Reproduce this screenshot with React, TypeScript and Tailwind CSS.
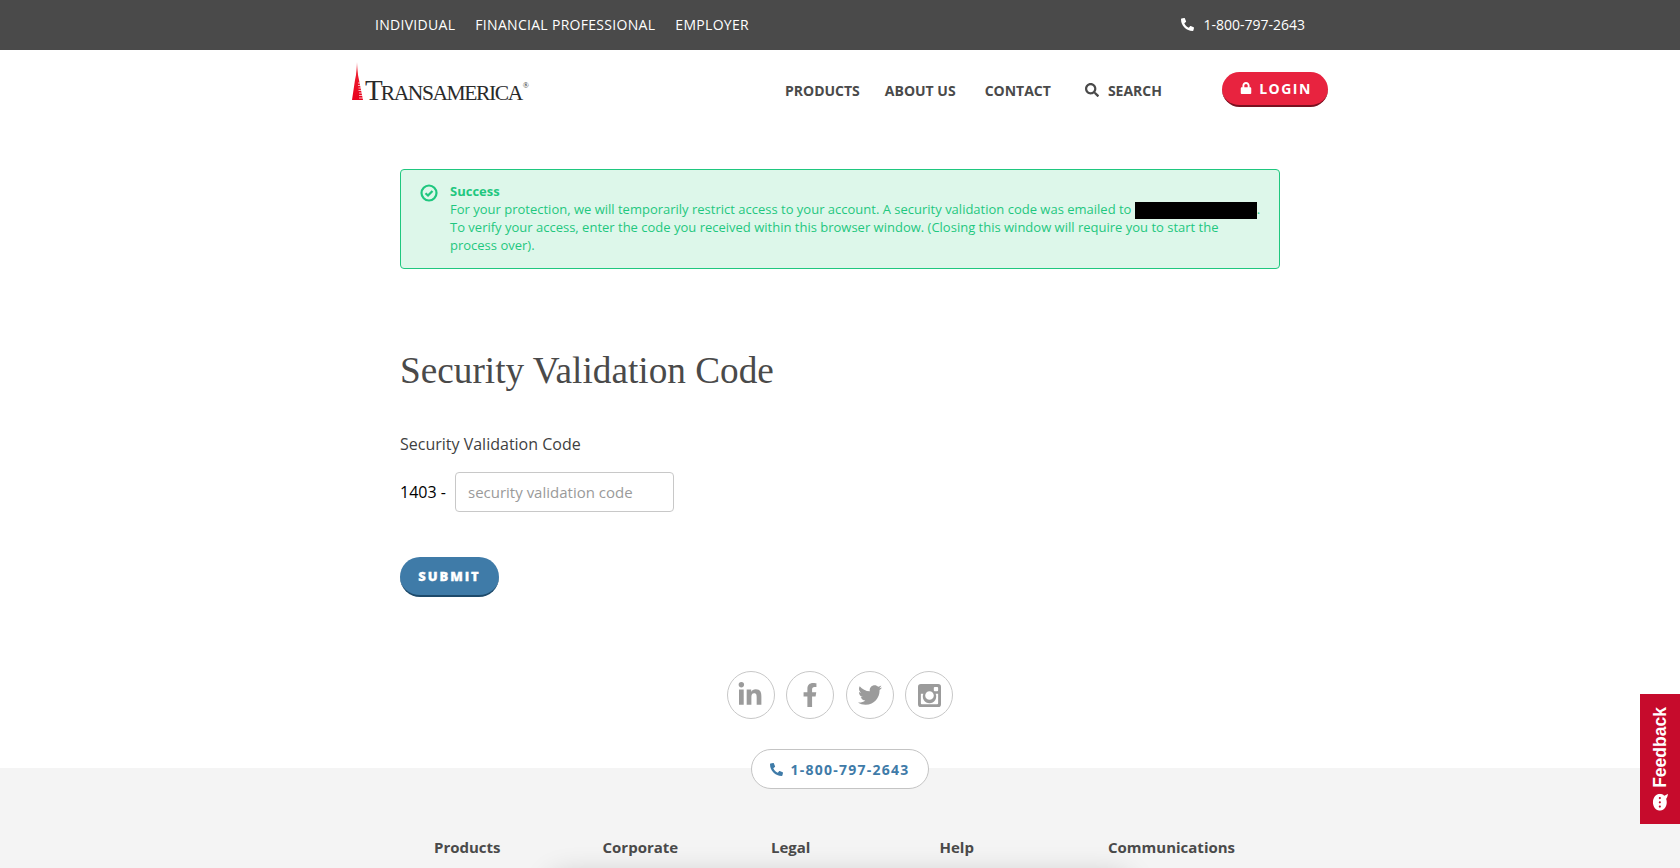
import { FaCommentDots, FaFacebookF, FaLinkedinIn, FaLock, FaPhone, FaSearch, FaTwitter } from "react-icons/fa";

const footerColumns = ["Products", "Corporate", "Legal", "Help", "Communications"];

function InstagramIcon() {
  return (
    <svg viewBox="0 0 24 24" className="w-[23px] h-[23px] ml-[1px]" fill="#9b9b9b">
      <path
        fillRule="evenodd"
        d="M3 0h18a3 3 0 0 1 3 3v18a3 3 0 0 1-3 3H3a3 3 0 0 1-3-3V3a3 3 0 0 1 3-3Zm14.5 3a1 1 0 0 0-1 1v2.5a1 1 0 0 0 1 1H20a1 1 0 0 0 1-1V4a1 1 0 0 0-1-1h-2.5ZM3 10.2V20a1 1 0 0 0 1 1h16a1 1 0 0 0 1-1v-9.800h-2.600a7 7 0 1 1-12.800 0H3ZM12 7.500a4.500 4.500 0 1 0 0 9 4.500 4.500 0 0 0 0-9Z"
      />
    </svg>
  );
}

function CheckIcon() {
  return (
    <svg viewBox="0 0 18 18" className="w-[18px] h-[18px] mt-[1px] ml-[-1px] shrink-0" fill="none" stroke="#1fc77f">
      <circle cx="9" cy="9" r="7.5" strokeWidth="2.2" />
      <path d="M5.500 9.200 8 11.500l4.500-4.600" strokeWidth="2.200" />
    </svg>
  );
}

function Logo() {
  return (
    <div className="flex items-end h-[40px]">
      <svg viewBox="0 0 11 38" className="w-[11px] h-[38px] mb-[5px]">
        <defs>
          <linearGradient id="spire" x1="0" x2="0" y1="0" y2="1">
            <stop offset="0" stopColor="#f7a0a8" />
            <stop offset="0.3" stopColor="#ee1c2e" />
            <stop offset="1" stopColor="#e8001c" />
          </linearGradient>
        </defs>
        <path d="M5 0 6 13l1 5 4 20H0l3-20 1-5Z" fill="url(#spire)" />
        <path
          d="M6 21h5M6 23.500h5M6.500 26h5M6.500 28.500h5M7 31h5M7 33.500h5M7 36h5"
          stroke="#fff"
          strokeWidth="0.9"
          opacity="0.8"
        />
      </svg>
      <div className="ml-[2px] flex items-baseline font-['Liberation_Serif',serif] text-[#2a2a2a] leading-none">
        <span className="text-[29px]">T</span>
        <span className="text-[21.5px] tracking-[-1.4px] ml-[-2px]">RANSAMERICA</span>
        <span className="text-[8px] self-start mt-[6px] ml-[1px]">®</span>
      </div>
    </div>
  );
}

export default function App() {
  return (
    <div className="relative h-screen overflow-hidden bg-white font-['Open_Sans',sans-serif] text-[#4a4a4a]">
      {/* Top bar */}
      <div className="h-[50px] bg-[#4a4a4a] text-white text-[14px]">
        <div className="w-[1040px] mx-auto h-full flex items-center pl-[55px] pr-[55px] pb-[2px] justify-between">
          <div className="flex gap-5 font-medium tracking-[0.3px]">
            <a>INDIVIDUAL</a>
            <a>FINANCIAL PROFESSIONAL</a>
            <a>EMPLOYER</a>
          </div>
          <div className="flex items-center gap-[9px]">
            <FaPhone className="w-[13px] h-[13px] -scale-x-100" />
            <span>1-800-797-2643</span>
          </div>
        </div>
      </div>

      {/* Main nav */}
      <div className="h-[69px] w-[1040px] mx-auto flex items-start pl-[32px] pr-[32px] justify-between">
        <div className="mt-[15px]">
          <Logo />
        </div>
        <div className="flex items-center mt-[23px] text-[14px] font-bold">
          <a className="mr-[25px]">PRODUCTS</a>
          <a className="mr-[29px]">ABOUT US</a>
          <a className="mr-[34px]">CONTACT</a>
          <FaSearch className="w-[14px] h-[14px] mr-[9px]" />
          <a className="mr-[60px]">SEARCH</a>
          <button className="w-[106px] h-[35px] rounded-full bg-[#e8233f] border-b-2 border-[#7a1020] pl-[2px] pb-[1px] text-white text-[14px] tracking-[1.5px] flex items-center justify-center gap-[7px] mt-[-1px]">
            <FaLock className="w-[12px] h-[12px]" />
            LOGIN
          </button>
        </div>
      </div>

      {/* Content */}
      <div className="w-[880px] mx-auto">
        <div className="mt-[50px] h-[100px] rounded border border-[#1fc77f] bg-[#ddf7ea] text-[#1fc77f] text-[13px] leading-[17.75px] flex pt-[13px] pl-[20px]">
          <CheckIcon />
          <div className="ml-[12px] whitespace-nowrap">
            <div className="font-bold">Success</div>
            <div>
              For your protection, we will temporarily restrict access to your account. A security validation code was
              emailed to <span className="inline-block w-[122px] h-[17px] bg-black align-middle"></span>.
              <br />
              To verify your access, enter the code you received within this browser window. (Closing this window will
              require you to start the
              <br />
              process over).
            </div>
          </div>
        </div>

        <h1 className="mt-[77px] font-['Liberation_Serif',serif] text-[37.25px] leading-[50px] text-[#4a4a4a]">
          Security Validation Code
        </h1>

        <label className="block mt-[36px] text-[16px] leading-[24px] text-[#3f3f3f]">Security Validation Code</label>
        <div className="mt-[16px] flex items-center text-[16px] text-black">
          <span className="w-[55px]">1403 -</span>
          <input
            placeholder="security validation code"
            className="w-[219px] h-[40px] rounded border border-[#c8c8c8] px-[12px] text-[15px] placeholder:text-[#9a9a9a] outline-none"
          />
        </div>

        <button className="mt-[45px] w-[99px] h-[40px] rounded-full bg-[#3f7ba8] border-b-2 border-[#1d4a6b] pt-[1px] text-white text-[13px] font-extrabold tracking-[1.9px] [-webkit-text-stroke:0.3px_white]">
          SUBMIT
        </button>
      </div>

      {/* Social */}
      <div className="mt-[74px] flex justify-center gap-[11.5px] text-[#9b9b9b]">
        <a className="w-[48px] h-[48px] rounded-full border border-[#c8c8c8] flex items-center justify-center">
          <FaLinkedinIn className="w-[26px] h-[26px] mr-[2px]" />
        </a>
        <a className="w-[48px] h-[48px] rounded-full border border-[#c8c8c8] flex items-center justify-center">
          <FaFacebookF className="w-[24px] h-[24px] mr-[1px]" />
        </a>
        <a className="w-[48px] h-[48px] rounded-full border border-[#c8c8c8] flex items-center justify-center">
          <FaTwitter className="w-[24px] h-[24px]" />
        </a>
        <a className="w-[48px] h-[48px] rounded-full border border-[#c8c8c8] flex items-center justify-center">
          <InstagramIcon />
        </a>
      </div>

      {/* Footer */}
      <div className="mt-[49px] h-[200px] bg-[#f4f4f4] relative">
        <div className="absolute left-[751px] top-[-19px] w-[178px] h-[40px] rounded-full border border-[#c4c4c4] bg-white flex items-center justify-center gap-[7px] text-[#3f7ba8] text-[14px] font-bold tracking-[1.25px]">
          <FaPhone className="w-[13px] h-[13px] -scale-x-100" />
          1-800-797-2643
        </div>
        <div className="pt-[67px] pl-[434px] flex text-[15px] font-bold text-[#4a4a4a]">
          {footerColumns.map((name) => (
            <div key={name} className="w-[168.500px] leading-[24px]">
              {name}
            </div>
          ))}
        </div>
        <div className="absolute left-[550px] top-[108px] w-[580px] h-[30px] rounded-[20px] shadow-[0_0_30px_rgba(0,0,0,0.2)]"></div>
      </div>

      {/* Feedback tab */}
      <div className="fixed right-0 top-[694px] w-[40px] h-[130px] bg-[#c60b2c] text-white">
        <div className="absolute left-1/2 top-1/2 -translate-x-1/2 -translate-y-1/2 -rotate-90 flex items-center gap-[6px] whitespace-nowrap font-['Liberation_Sans',sans-serif] font-bold text-[17.5px]">
          <FaCommentDots className="w-[17px] h-[17px] -scale-x-100" />
          Feedback
        </div>
      </div>
    </div>
  );
}
